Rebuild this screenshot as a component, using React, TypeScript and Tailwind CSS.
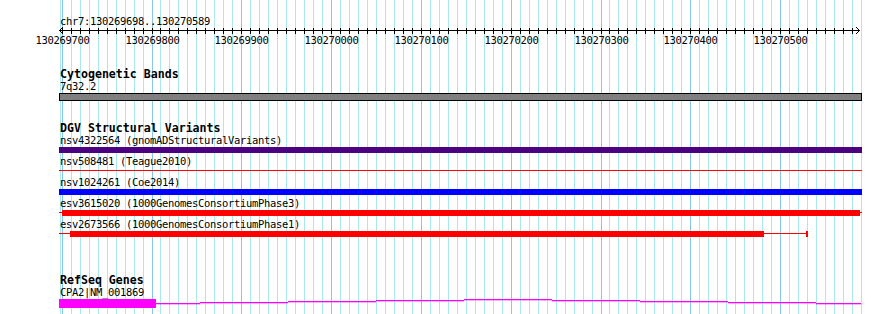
const X0 = 61.7; // pixel of 130269700
const PX = 0.898; // pixels per bp
const LEFT = 59;
const W = 803;

const gridXs = Array.from({ length: 90 }, (_, k) => ({
  x: Math.round(X0 + k * 10 * PX) + 0.5,
  major: k % 10 === 0,
}));

function Grid() {
  return (
    <svg className="absolute inset-0" width={890} height={314}>
      <line x1={60.5} x2={60.5} y1={0} y2={314} stroke="#aae8ee" />
      {gridXs.map((g, i) => (
        <line
          key={i}
          x1={g.x}
          x2={g.x}
          y1={0}
          y2={314}
          stroke={g.major ? "#88c6ea" : "#aae8ee"}
        />
      ))}
    </svg>
  );
}

function Ruler() {
  const font = {
    fontFamily: "'DejaVu Sans Mono', monospace",
    fontSize: 10.5,
    letterSpacing: -0.32,
  };
  return (
    <svg className="block" width={890} height={48}>
      <text x={60} y={25} {...font} fill="#000">
        chr7:130269698..130270589
      </text>
      <line x1={59} x2={860} y1={30.5} y2={30.5} stroke="#000" />
      <polyline points="63,27 59.5,30.5 63,34" fill="none" stroke="#000" />
      <polyline points="856,27 859.5,30.5 856,34" fill="none" stroke="#000" />
      {gridXs.slice(0, 89).map((g, i) => (
        <line key={i} x1={g.x} x2={g.x} y1={28} y2={34} stroke="#000" />
      ))}
      {gridXs
        .filter((g) => g.major)
        .map((g, i) => (
          <text key={i} x={g.x} y={44} textAnchor="middle" {...font} fill="#000">
            {130269700 + i * 100}
          </text>
        ))}
    </svg>
  );
}

type Feature = {
  label: string;
  color: string;
  thin?: boolean;
  start?: number;
  end?: number;
  tailTo?: number;
};

const variants: Feature[] = [
  { label: "nsv4322564 (gnomADStructuralVariants)", color: "#4b0082" },
  { label: "nsv508481 (Teague2010)", color: "#ff0000", thin: true },
  { label: "nsv1024261 (Coe2014)", color: "#0000ff" },
  { label: "esv3615020 (1000GenomesConsortiumPhase3)", color: "#ff0000", start: 62, end: 860, tailTo: 862 },
  { label: "esv2673566 (1000GenomesConsortiumPhase1)", color: "#ff0000", start: 70, end: 764, tailTo: 808 },
];

function FeatureBar({ f }: { f: Feature }) {
  if (f.thin) {
    return (
      <svg className="block" width={W} height={6}>
        <rect x={0} y={2} width={W} height={1} fill={f.color} />
      </svg>
    );
  }
  const s = (f.start ?? LEFT) - LEFT;
  const e = (f.end ?? LEFT + W) - LEFT;
  const t = (f.tailTo ?? LEFT + W) - LEFT;
  return (
    <svg className="block" width={W} height={6}>
      {s > 0 && <rect x={0} y={2} width={s} height={1} fill={f.color} />}
      <rect x={s} y={0} width={e - s} height={6} fill={f.color} />
      {t > e && <rect x={e} y={2} width={t - e} height={1} fill={f.color} />}
      {f.tailTo && f.tailTo < 850 && (
        <rect x={t - 2} y={0} width={2} height={6} fill={f.color} />
      )}
    </svg>
  );
}

const geneSteps = [156, 200, 288, 376, 464, 552, 640, 728, 816, 861];
const geneYs = [4, 3, 2, 1, 0, 1, 2, 3, 4];

function GeneBar() {
  return (
    <svg className="block" width={W} height={10}>
      <rect x={0} y={0} width={156 - LEFT} height={9} fill="#ff00ff" />
      {geneYs.map((y, i) => (
        <rect
          key={i}
          x={geneSteps[i] - LEFT}
          y={y}
          width={geneSteps[i + 1] - geneSteps[i]}
          height={1.3}
          fill="#ff00ff"
        />
      ))}
    </svg>
  );
}

function Title({ children, className = "" }: { children: string; className?: string }) {
  return (
    <div className={`text-[11.6px] leading-[13px] font-bold whitespace-pre ${className}`}>
      {children}
    </div>
  );
}

function Label({ children }: { children: string }) {
  return (
    <div className="h-[12px] text-[10.5px] leading-[10.5px] tracking-[-0.32px] whitespace-pre">
      {children}
    </div>
  );
}

export default function App() {
  return (
    <div className="relative w-[890px] h-[314px] overflow-hidden bg-white text-black font-['DejaVu_Sans_Mono',monospace]">
      <Grid />
      <div className="relative">
        <Ruler />
        <div className="pl-[59px]">
          <Title className="mt-[20px] pl-px">Cytogenetic Bands</Title>
          <div className="pl-px">
            <Label>7q32.2</Label>
          </div>
          <div className="h-[8px] w-[803px] border border-black bg-[#808080]" />

          <Title className="mt-[21px] pl-px">DGV Structural Variants</Title>
          <div className="flex flex-col gap-[3px]">
            {variants.map((f) => (
              <div key={f.label}>
                <div className="pl-px">
                  <Label>{f.label}</Label>
                </div>
                <FeatureBar f={f} />
              </div>
            ))}
          </div>

          <Title className="mt-[37px] pl-px">RefSeq Genes</Title>
          <div className="pl-px">
            <Label>CPA2|NM_001869</Label>
          </div>
          <GeneBar />
        </div>
      </div>
    </div>
  );
}
